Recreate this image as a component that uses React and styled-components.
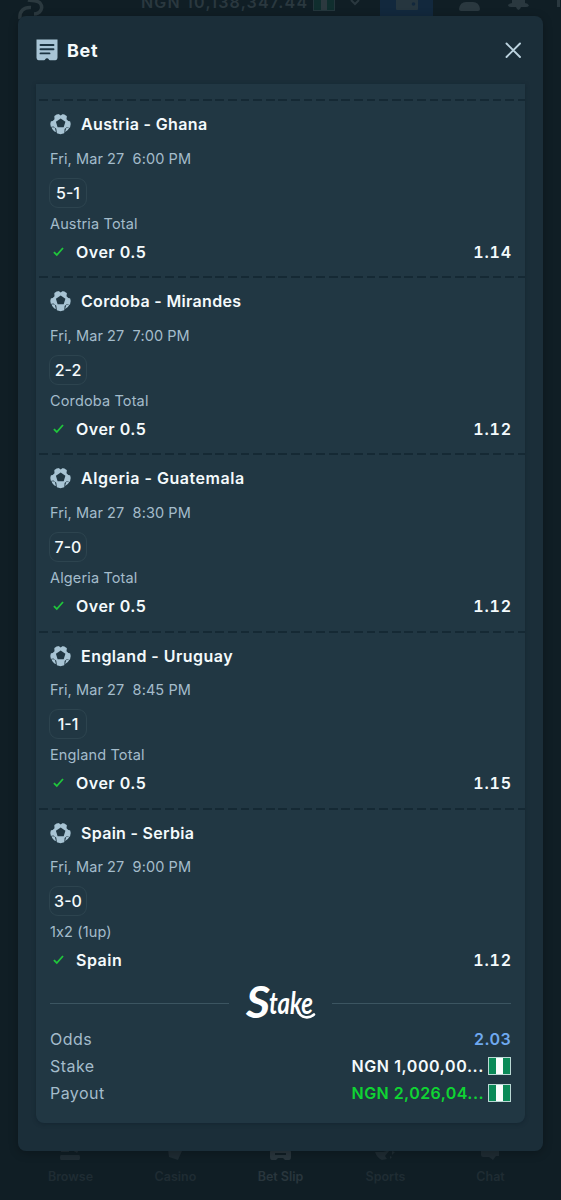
import React from "react";
import styled, { createGlobalStyle } from "styled-components";

const Global = createGlobalStyle`
  * { box-sizing: border-box; }
  html, body { margin: 0; background: #101e25; }
  body { font-family: Inter, "Liberation Sans", sans-serif; color: #f4fafc; }
  svg { display: block; flex: none; }
`;

const Page = styled.div`
  position: relative;
  display: flex;
  flex-direction: column;
  justify-content: space-between;
  width: 561px;
  height: 1200px;
  overflow: hidden;
  background: #101e25;
`;

const TopBar = styled.header`
  display: flex;
  align-items: flex-start;
  height: 22px;
  padding-left: 17px;
  color: #2a383f;
`;

const Balance = styled.div`
  display: flex;
  align-items: center;
  gap: 5px;
  height: 20px;
  margin: -8px 0 0 96px;
  font-size: 16px;
  font-weight: 600;
  letter-spacing: 1.2px;
  white-space: nowrap;
`;

const DimFlag = styled.i`
  width: 22px;
  height: 15px;
  margin-top: 3px;
  border: 1px solid #24363c;
  background: linear-gradient(90deg, #102e2e 33%, #2c393f 33% 67%, #102e2e 67%);
`;

const Chevron = styled.svg`
  margin-left: 15px;
`;

const WalletButton = styled.div`
  display: flex;
  justify-content: center;
  width: 54px;
  height: 22px;
  margin-left: 20px;
  background: #12283d;
`;

const TopIcons = styled.div`
  display: flex;
  gap: 28px;
  margin-left: 26px;
`;

const BottomBar = styled.nav`
  display: flex;
  height: 60px;
  padding: 2px 18px 0;
`;

const NavItem = styled.div`
  display: flex;
  flex: 1;
  flex-direction: column;
  align-items: center;
  color: ${(p) => (p.$active ? "#29363d" : "#1f2c33")};
  font-size: 12.5px;
  font-weight: 600;
  line-height: 16px;
  svg { margin-bottom: 7px; }
`;

const Modal = styled.section`
  position: absolute;
  top: 16px;
  left: 18px;
  display: flex;
  flex-direction: column;
  width: 525px;
  height: 1135px;
  padding: 0 18px 28px;
  border-radius: 8px;
  background: #1b2e39;
  box-shadow: 0 2px 10px rgba(0, 0, 0, 0.25);
`;

const ModalHeader = styled.div`
  display: flex;
  flex: none;
  align-items: center;
  justify-content: space-between;
  height: 68px;
  padding: 0 3px 0 0;
`;

const Title = styled.h1`
  display: flex;
  align-items: center;
  gap: 9px;
  margin: 0;
  font-size: 18px;
  font-weight: 700;
  letter-spacing: 0.7px;
`;

const Slip = styled.div`
  display: flex;
  flex: 1;
  flex-direction: column;
  padding-top: 15px;
  border-radius: 0 0 8px 8px;
  background: #213743;
  box-shadow: 0 1px 4px rgba(8, 24, 34, 0.35);
`;

const Leg = styled.article`
  display: flex;
  flex: none;
  flex-direction: column;
  align-items: flex-start;
  height: 177.1px;
  padding: 0 14px;
`;

const Perforation = styled.div`
  align-self: stretch;
  flex: none;
  height: 2px;
  margin: 0.3px -14px 0 -11px;
  background: repeating-linear-gradient(90deg, #152934 0 8.8px, transparent 8.8px 12.6px);
`;

const Match = styled.h2`
  display: flex;
  align-items: center;
  gap: 10px;
  height: 22px;
  margin: 12px 0 13.7px;
  font-size: 16px;
  font-weight: 600;
  letter-spacing: ${(p) => p.$track}px;
  white-space: nowrap;
`;

const Kickoff = styled.div`
  height: 20px;
  font-size: 14.5px;
  line-height: 20px;
  letter-spacing: 0.08px;
  white-space: pre;
  color: #a4bccb;
`;

const Score = styled.div`
  height: 30px;
  width: 38px;
  margin: 9px 0 0 -1px;
  border: 1.5px solid #2d444f;
  border-radius: 9px;
  font-size: 16px;
  font-weight: 500;
  line-height: 28px;
  text-align: center;
`;

const Market = styled.div`
  height: 18px;
  margin-top: 7px;
  font-size: 14.5px;
  line-height: 18px;
  letter-spacing: 0.14px;
  font-feature-settings: "calt" 0;
  color: #a4bccb;
`;

const Selection = styled.div`
  display: flex;
  align-items: center;
  align-self: stretch;
  gap: 11px;
  height: 22px;
  margin-top: 8px;
  padding-left: 3px;
  font-size: 16px;
  font-weight: 600;
  letter-spacing: 0.5px;
`;

const Price = styled.span`
  margin-left: auto;
  margin-right: -0.9px;
  font-variant-numeric: tabular-nums;
  letter-spacing: 0.8px;
`;

const BrandRow = styled.div`
  display: flex;
  align-items: center;
  gap: 16px;
  height: 40px;
  margin-top: -1px;
  padding: 0 14px;
  &::before, &::after {
    content: "";
    flex: 1;
    height: 1px;
    background: #3c5561;
  }
`;

const Totals = styled.dl`
  margin: 2px 14px 0;
`;

const TotalRow = styled.div`
  display: flex;
  align-items: center;
  justify-content: space-between;
  height: 27px;
`;

const Label = styled.dt`
  font-size: 16px;
  letter-spacing: 0.45px;
  color: #a4bccb;
`;

const Value = styled.dd`
  display: flex;
  align-items: center;
  gap: 4px;
  margin: 0;
  font-size: 16px;
  font-weight: 600;
  letter-spacing: ${(p) => p.$track}px;
  color: ${(p) => p.$color};
`;

const Flag = styled.i`
  width: 23px;
  height: 18px;
  border: 1px solid #b9d8d4;
  background: linear-gradient(90deg, #0b8a58 33%, #fbfdfd 33% 67%, #0b8a58 67%);
`;

const Logo = styled.svg`
  overflow: visible;
  font-family: Lato, sans-serif;
  font-style: italic;
  font-weight: 900;
`;

const SlipIcon = () => (
  <svg width="22" height="22" viewBox="0 0 22 22">
    <path fill="#a9c5d6" d="M.5.5h21v18.300q0 2.200-2 2.500h-5.500q-1 0-1.300-1-.5-1.100-1.700-1.100t-1.700 1.100q-.3 1-1.300 1H2.500q-2-.3-2-2.500z" />
    <path stroke="#1b3341" strokeWidth="1.900" strokeLinecap="round" d="M4.500 6h13M4.500 10.200h13M4.500 14.400h9" />
  </svg>
);

const CloseIcon = () => (
  <svg width="17" height="17" viewBox="0 0 17 17">
    <path d="M1.500 1.500l13.500 13.500M15 1.500L1.500 15" stroke="#bcd3df" strokeWidth="1.900" strokeLinecap="round" />
  </svg>
);

const BallIcon = () => (
  <svg width="21" height="22" viewBox="0 0 21 22">
    <circle cx="10.500" cy="11" r="10.200" fill="#a8c4d4" />
    <path fill="#213743" d="M10.700 5.400l4.700 3.300-1.700 5.600H7.600L5.900 8.700zM6.800-.3l3.900 2.700 3.700-2.700zM-.3 8.600l3-.6 1.800-1.700-.2-3.300L0 0zM21.300 8.600l-3-.6-1.800-1.700.4-3.300L21 0zM-.3 14l3.800-.6 2.800 2.300.8 6.300H0zM21.300 15l-4.500-.8-2.200 1.700-.4 5.900H21z" />
    <path fill="#a8c4d4" d="M1.500 14.200l3.200.3 1.300 4.500q-3.300-1-4.500-4.800zM19.500 14.600l-3.200.3-1.300 4q3-.8 4.500-4.300z" />
  </svg>
);

const CheckIcon = () => (
  <svg width="12" height="12" viewBox="0 0 12 12">
    <path d="M.9 6.100l2.900 2.900 6.200-7" fill="none" stroke="#20c63c" strokeWidth="1.800" />
  </svg>
);

const Wordmark = () => (
  <Logo width="71" height="38" viewBox="0 0 71 38" fill="#fff">
    <text x="1" y="33.500" fontSize="44" fontWeight="700" textLength="24" lengthAdjust="spacingAndGlyphs">S</text>
    <text x="24" y="29.500" fontSize="31" fontWeight="700" textLength="44" lengthAdjust="spacingAndGlyphs">take</text>
    <path d="M54 29c3 5 10 6 15 1.500" fill="none" stroke="#fff" strokeWidth="2.600" strokeLinecap="round" />
  </Logo>
);

const legs = [
  { match: "Austria - Ghana", track: 0.35, time: "6:00 PM", score: "5-1", market: "Austria Total", pick: "Over 0.5", odds: "1.14" },
  { match: "Cordoba - Mirandes", track: 0.33, time: "7:00 PM", score: "2-2", market: "Cordoba Total", pick: "Over 0.5", odds: "1.12" },
  { match: "Algeria - Guatemala", track: 0.53, time: "8:30 PM", score: "7-0", market: "Algeria Total", pick: "Over 0.5", odds: "1.12" },
  { match: "England - Uruguay", track: 0.46, time: "8:45 PM", score: "1-1", market: "England Total", pick: "Over 0.5", odds: "1.15" },
  { match: "Spain - Serbia", track: 0.3, time: "9:00 PM", score: "3-0", market: "1x2 (1up)", pick: "Spain", odds: "1.12" },
];

const navItems = [
  { name: "Browse", d: "M1 0h8v2H1zM12 0h7l-2 3zM1 5h18q1 0 1 2v1q0 2-1 2H1q-1 0-1-2V7q0-2 1-2z" },
  { name: "Casino", d: "M3 0h13l1 1-4 9-9-3z" },
  { name: "Bet Slip", active: true, d: "M2 0h17q2 0 2 2v5q0 3-2 3h-4l-2-2H8l-2 2H2q-2 0-2-3V2q0-2 2-2zM5 3v2h11V3z" },
  { name: "Sports", d: "M0 2h8l7-2-5 6 2 3-5 1q-5-2-7-8zM17 1l3 1-3 3zM15 6l2 1-2 2z" },
  { name: "Chat", d: "M1 0h18v6h-3l-3 4-4-3H3q-2 0-2-2z" },
];

export default function App() {
  return (
    <Page>
      <Global />
      <TopBar>
        <svg width="28" height="22" viewBox="0 0 28 22" fill="none" stroke="#2b393f" strokeWidth="3.500">
          <path d="M11 0c4 1 9 0 12 3 4 5 0 11-6 11M14 7.500C7 7 2 11 3 19" />
        </svg>
        <Balance>NGN 10,138,347.44<DimFlag /></Balance>
        <Chevron width="10" height="6" viewBox="0 0 10 6">
          <path d="M1 0l4 4 4-4" fill="none" stroke="#2a383f" strokeWidth="2" />
        </Chevron>
        <WalletButton>
          <svg width="22" height="11" viewBox="0 0 22 11"><path d="M0 0h22v9q0 1-1 1H1q-1 0-1-1z" fill="#26363f" /><circle cx="17.500" cy="4" r="1.800" fill="#12283d" /></svg>
        </WalletButton>
        <TopIcons>
          <svg width="21" height="12" viewBox="0 0 21 12"><path d="M0 9q1-7 7-7h7q6 0 7 7 0 2-2 2H2q-2 0-2-2z" fill="#2a383f" /></svg>
          <svg width="21" height="12" viewBox="0 0 21 12"><path d="M4 0h13v3q3 0 4 2.500-1 1.500-3 1.500h-5q-1 3-2.500 3T8 7H3Q1 7 0 5.500 1 3 4 3z" fill="#2a383f" /></svg>
          <svg width="4" height="8" viewBox="0 0 4 8"><path d="M0 0h3v7H0z" fill="#2a383f" /></svg>
        </TopIcons>
      </TopBar>
      <BottomBar>
        {navItems.map((n) => (
          <NavItem key={n.name} $active={n.active}>
            <svg width="21" height="20" viewBox="0 -8 21 20"><path d={n.d} fill="currentColor" fillRule="evenodd" /></svg>
            {n.name}
          </NavItem>
        ))}
      </BottomBar>
      <Modal>
        <ModalHeader>
          <Title><SlipIcon />Bet</Title>
          <CloseIcon />
        </ModalHeader>
        <Slip>
          {legs.map((l) => (
            <Leg key={l.match}>
              <Perforation />
              <Match $track={l.track}><BallIcon />{l.match}</Match>
              <Kickoff>{"Fri, Mar 27  " + l.time}</Kickoff>
              <Score>{l.score}</Score>
              <Market>{l.market}</Market>
              <Selection><CheckIcon />{l.pick}<Price>{l.odds}</Price></Selection>
            </Leg>
          ))}
          <BrandRow><Wordmark /></BrandRow>
          <Totals>
            <TotalRow><Label>Odds</Label><Value $color="#6fa9ef" $track={0.4}>2.03</Value></TotalRow>
            <TotalRow><Label>Stake</Label><Value $color="#f4fafc" $track={0.6}>NGN 1,000,00...<Flag /></Value></TotalRow>
            <TotalRow><Label>Payout</Label><Value $color="#0fd433" $track={0.44}>NGN 2,026,04...<Flag /></Value></TotalRow>
          </Totals>
        </Slip>
      </Modal>
    </Page>
  );
}
